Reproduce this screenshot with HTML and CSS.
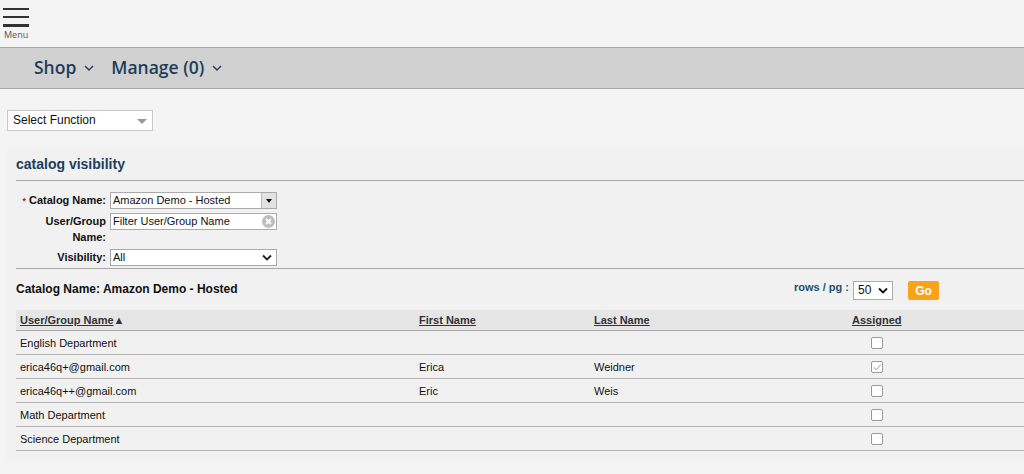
FILE: index.html
```html
<!DOCTYPE html>
<html lang="en">
<head>
    <meta charset="UTF-8">
    <title>Catalog Visibility</title>
    <link rel="stylesheet" href="styles.css">
</head>
<body>
    <!-- Cabecera con menu -->
    <div class="top">
        <div class="menu-btn">
            <span class="bar"></span>
            <span class="bar"></span>
            <span class="bar"></span>
            <span class="menu-label">Menu</span>
        </div>
    </div>

    <div class="nav">
        <span class="nav-item">Shop <svg class="chev" width="10" height="6" viewBox="0 0 10 6"><path d="M1 1l4 4 4-4" fill="none" stroke="#1d3d5c" stroke-width="1.4"/></svg></span>
        <span class="nav-item">Manage (0) <svg class="chev" width="10" height="6" viewBox="0 0 10 6"><path d="M1 1l4 4 4-4" fill="none" stroke="#1d3d5c" stroke-width="1.4"/></svg></span>
    </div>

    <div class="func-row">
        <div class="func-select">Select Function <span class="func-arrow"></span></div>
    </div>

    <div class="panel">
        <h2 class="panel-title">catalog visibility</h2>

        <div class="form">
            <div class="form-row">
                <label><span class="req">*</span> Catalog Name:</label>
                <div class="field">Amazon Demo - Hosted <span class="drop-btn"><span class="tri"></span></span></div>
            </div>
            <div class="form-row">
                <label>User/Group<br>Name:</label>
                <div class="field">Filter User/Group Name
                    <svg class="clear" width="13" height="13" viewBox="0 0 13 13"><circle cx="6.5" cy="6.5" r="6.5" fill="#bdbdbd"/><path d="M4 4l5 5M9 4l-5 5" stroke="#fff" stroke-width="1.8"/></svg>
                </div>
            </div>
            <div class="form-row">
                <label>Visibility:</label>
                <div class="field">All <svg class="sel-chev" width="10" height="7" viewBox="0 0 10 7"><path d="M1 1.5l4 4 4-4" fill="none" stroke="#222" stroke-width="1.8"/></svg></div>
            </div>
        </div>

        <div class="result-head">
            <span class="result-title">Catalog Name: Amazon Demo - Hosted</span>
            <div class="paging">
                <span class="rows-label">rows / pg :</span>
                <div class="rows-select">50 <svg width="10" height="7" viewBox="0 0 10 7"><path d="M1 1.5l4 4 4-4" fill="none" stroke="#111" stroke-width="1.8"/></svg></div>
                <button class="go-btn">Go</button>
            </div>
        </div>

        <table class="grid">
            <thead>
                <tr>
                    <th class="c-name"><a>User/Group Name</a>&#9650;</th>
                    <th class="c-first"><a>First Name</a></th>
                    <th class="c-last"><a>Last Name</a></th>
                    <th class="c-assign"><a>Assigned</a></th>
                </tr>
            </thead>
            <tbody>
                <tr><td>English Department</td><td></td><td></td><td class="c-assign"><span class="chk"></span></td></tr>
                <tr><td>erica46q+@gmail.com</td><td>Erica</td><td>Weidner</td><td class="c-assign"><span class="chk checked"><svg width="9" height="8" viewBox="0 0 9 8"><path d="M1 4.5l2.3 2.2L8 1.5" fill="none" stroke="#999" stroke-width="1"/></svg></span></td></tr>
                <tr><td>erica46q++@gmail.com</td><td>Eric</td><td>Weis</td><td class="c-assign"><span class="chk"></span></td></tr>
                <tr><td>Math Department</td><td></td><td></td><td class="c-assign"><span class="chk"></span></td></tr>
                <tr><td>Science Department</td><td></td><td></td><td class="c-assign"><span class="chk"></span></td></tr>
            </tbody>
        </table>
    </div>
</body>
</html>
```

FILE: styles.css
```css
/* Estilos de la pagina */
body {
    margin: 0;
    background: #f4f4f4;
    font-family: "Liberation Sans", Arial, sans-serif;
    font-size: 11px;
    color: #111;
}
.top {
    height: 47px;
}
.menu-btn {
    display: flex;
    flex-direction: column;
    align-items: flex-start;
    padding: 8px 0 0 3px;
    width: 27px;
}
.bar {
    display: block;
    width: 26px;
    height: 2px;
    background: #333;
    margin-bottom: 6px;
}
.bar:nth-child(3) {
    height: 3px;
    margin-bottom: 3px;
}
.menu-label {
    font-family: "Open Sans", sans-serif;
    font-size: 9px;
    color: #555;
    line-height: 10px;
    margin-left: 1px;
}
.nav {
    height: 40px;
    background: #d1d1d1;
    border-top: 1px solid #a9a9a9;
    border-bottom: 1px solid #a9a9a9;
    display: flex;
    align-items: center;
    gap: 17px;
    padding-left: 34px;
}
.nav-item {
    font-family: "Open Sans", sans-serif;
    font-size: 17.5px;
    font-weight: 600;
    color: #1d3d5c;
    display: flex;
    align-items: center;
    gap: 8px;
    margin-top: -3px;
}
.chev {
    margin-top: 3px;
}
.func-row {
    padding: 21px 0 0 7px;
    height: 39px;
}
.func-select {
    width: 139px;
    height: 19px;
    background: #fff;
    border: 1px solid #c8c8c8;
    font-size: 12px;
    line-height: 19px;
    padding-left: 5px;
    position: relative;
}
.func-arrow {
    position: absolute;
    right: 5px;
    top: 8px;
    border-left: 5px solid transparent;
    border-right: 5px solid transparent;
    border-top: 5px solid #999;
}
.panel {
    margin-left: 7px;
    background: #f1f1f1;
    padding: 0 0 10px 9px;
}
.panel-title {
    margin: 0;
    font-size: 14px;
    color: #1d3d5c;
    padding: 7px 0 8px 0;
    border-bottom: 1px solid #a9a9a9;
}
.form {
    padding: 11px 0 2px 0;
    border-bottom: 1px solid #a9a9a9;
}
.form-row {
    display: flex;
    align-items: flex-start;
    margin-bottom: 4px;
}
.form-row:last-child {
    margin-bottom: 0;
}
.form-row label {
    width: 90px;
    text-align: right;
    font-weight: bold;
    font-size: 11px;
    line-height: 16px;
    margin-right: 4px;
}
.req {
    color: #b22;
    font-size: 9px;
}
.field {
    width: 163px;
    height: 15px;
    border: 1px solid #aaa;
    background: #fff;
    font-size: 11px;
    line-height: 15px;
    padding-left: 2px;
    display: flex;
    align-items: center;
    justify-content: space-between;
}
.drop-btn {
    width: 14px;
    height: 15px;
    background: #e2e2e2;
    border-left: 1px solid #bbb;
    display: flex;
    align-items: center;
    justify-content: center;
}
.tri {
    border-left: 3px solid transparent;
    border-right: 3px solid transparent;
    border-top: 4px solid #111;
}
.clear {
    margin-right: 1px;
}
.sel-chev {
    margin-right: 4px;
}
.result-head {
    display: flex;
    justify-content: space-between;
    align-items: flex-start;
    padding: 12px 0 0 0;
    height: 29px;
}
.result-title {
    font-size: 12px;
    font-weight: bold;
    margin-top: 1px;
}
.paging {
    display: flex;
    align-items: flex-start;
    margin-right: 85px;
}
.rows-label {
    color: #1d4f70;
    font-weight: bold;
    font-size: 11px;
    margin-right: 4px;
}
.rows-select {
    width: 30px;
    height: 17px;
    background: #fff;
    border: 1px solid #aaa;
    font-size: 12px;
    line-height: 17px;
    padding-left: 4px;
    display: flex;
    align-items: center;
    justify-content: space-between;
    padding-right: 4px;
    margin-right: 15px;
}
.go-btn {
    width: 31px;
    height: 19px;
    background: #f9a21c;
    color: #fff;
    border: none;
    border-radius: 2px;
    font-family: "Liberation Sans", Arial, sans-serif;
    font-size: 12px;
    font-weight: bold;
    padding: 0;
}
.grid {
    width: 100%;
    border-collapse: collapse;
}
.grid th {
    background: #e6e6e6;
    text-align: left;
    font-size: 11px;
    font-weight: bold;
    height: 20px;
    padding: 0 0 0 4px;
    border-bottom: 1px solid #a9a9a9;
    color: #333;
}
.grid th a {
    color: #333;
    text-decoration: underline;
}
.grid td {
    height: 23px;
    padding: 0 0 0 4px;
    font-size: 11px;
    border-bottom: 1px solid #b3b3b3;
}
.c-name { width: 395px; }
.c-first { width: 171px; }
.c-last { width: 175px; }
.grid .c-assign {
    width: auto;
    text-align: left;
    padding-left: 83px;
}
.grid td.c-assign {
    padding-left: 102px;
}
.chk {
    display: inline-block;
    width: 10px;
    height: 10px;
    border: 1px solid #9a9a9a;
    border-radius: 2px;
    background: #fff;
    vertical-align: middle;
    position: relative;
}
.chk svg {
    position: absolute;
    left: 1px;
    top: 1px;
}
```
